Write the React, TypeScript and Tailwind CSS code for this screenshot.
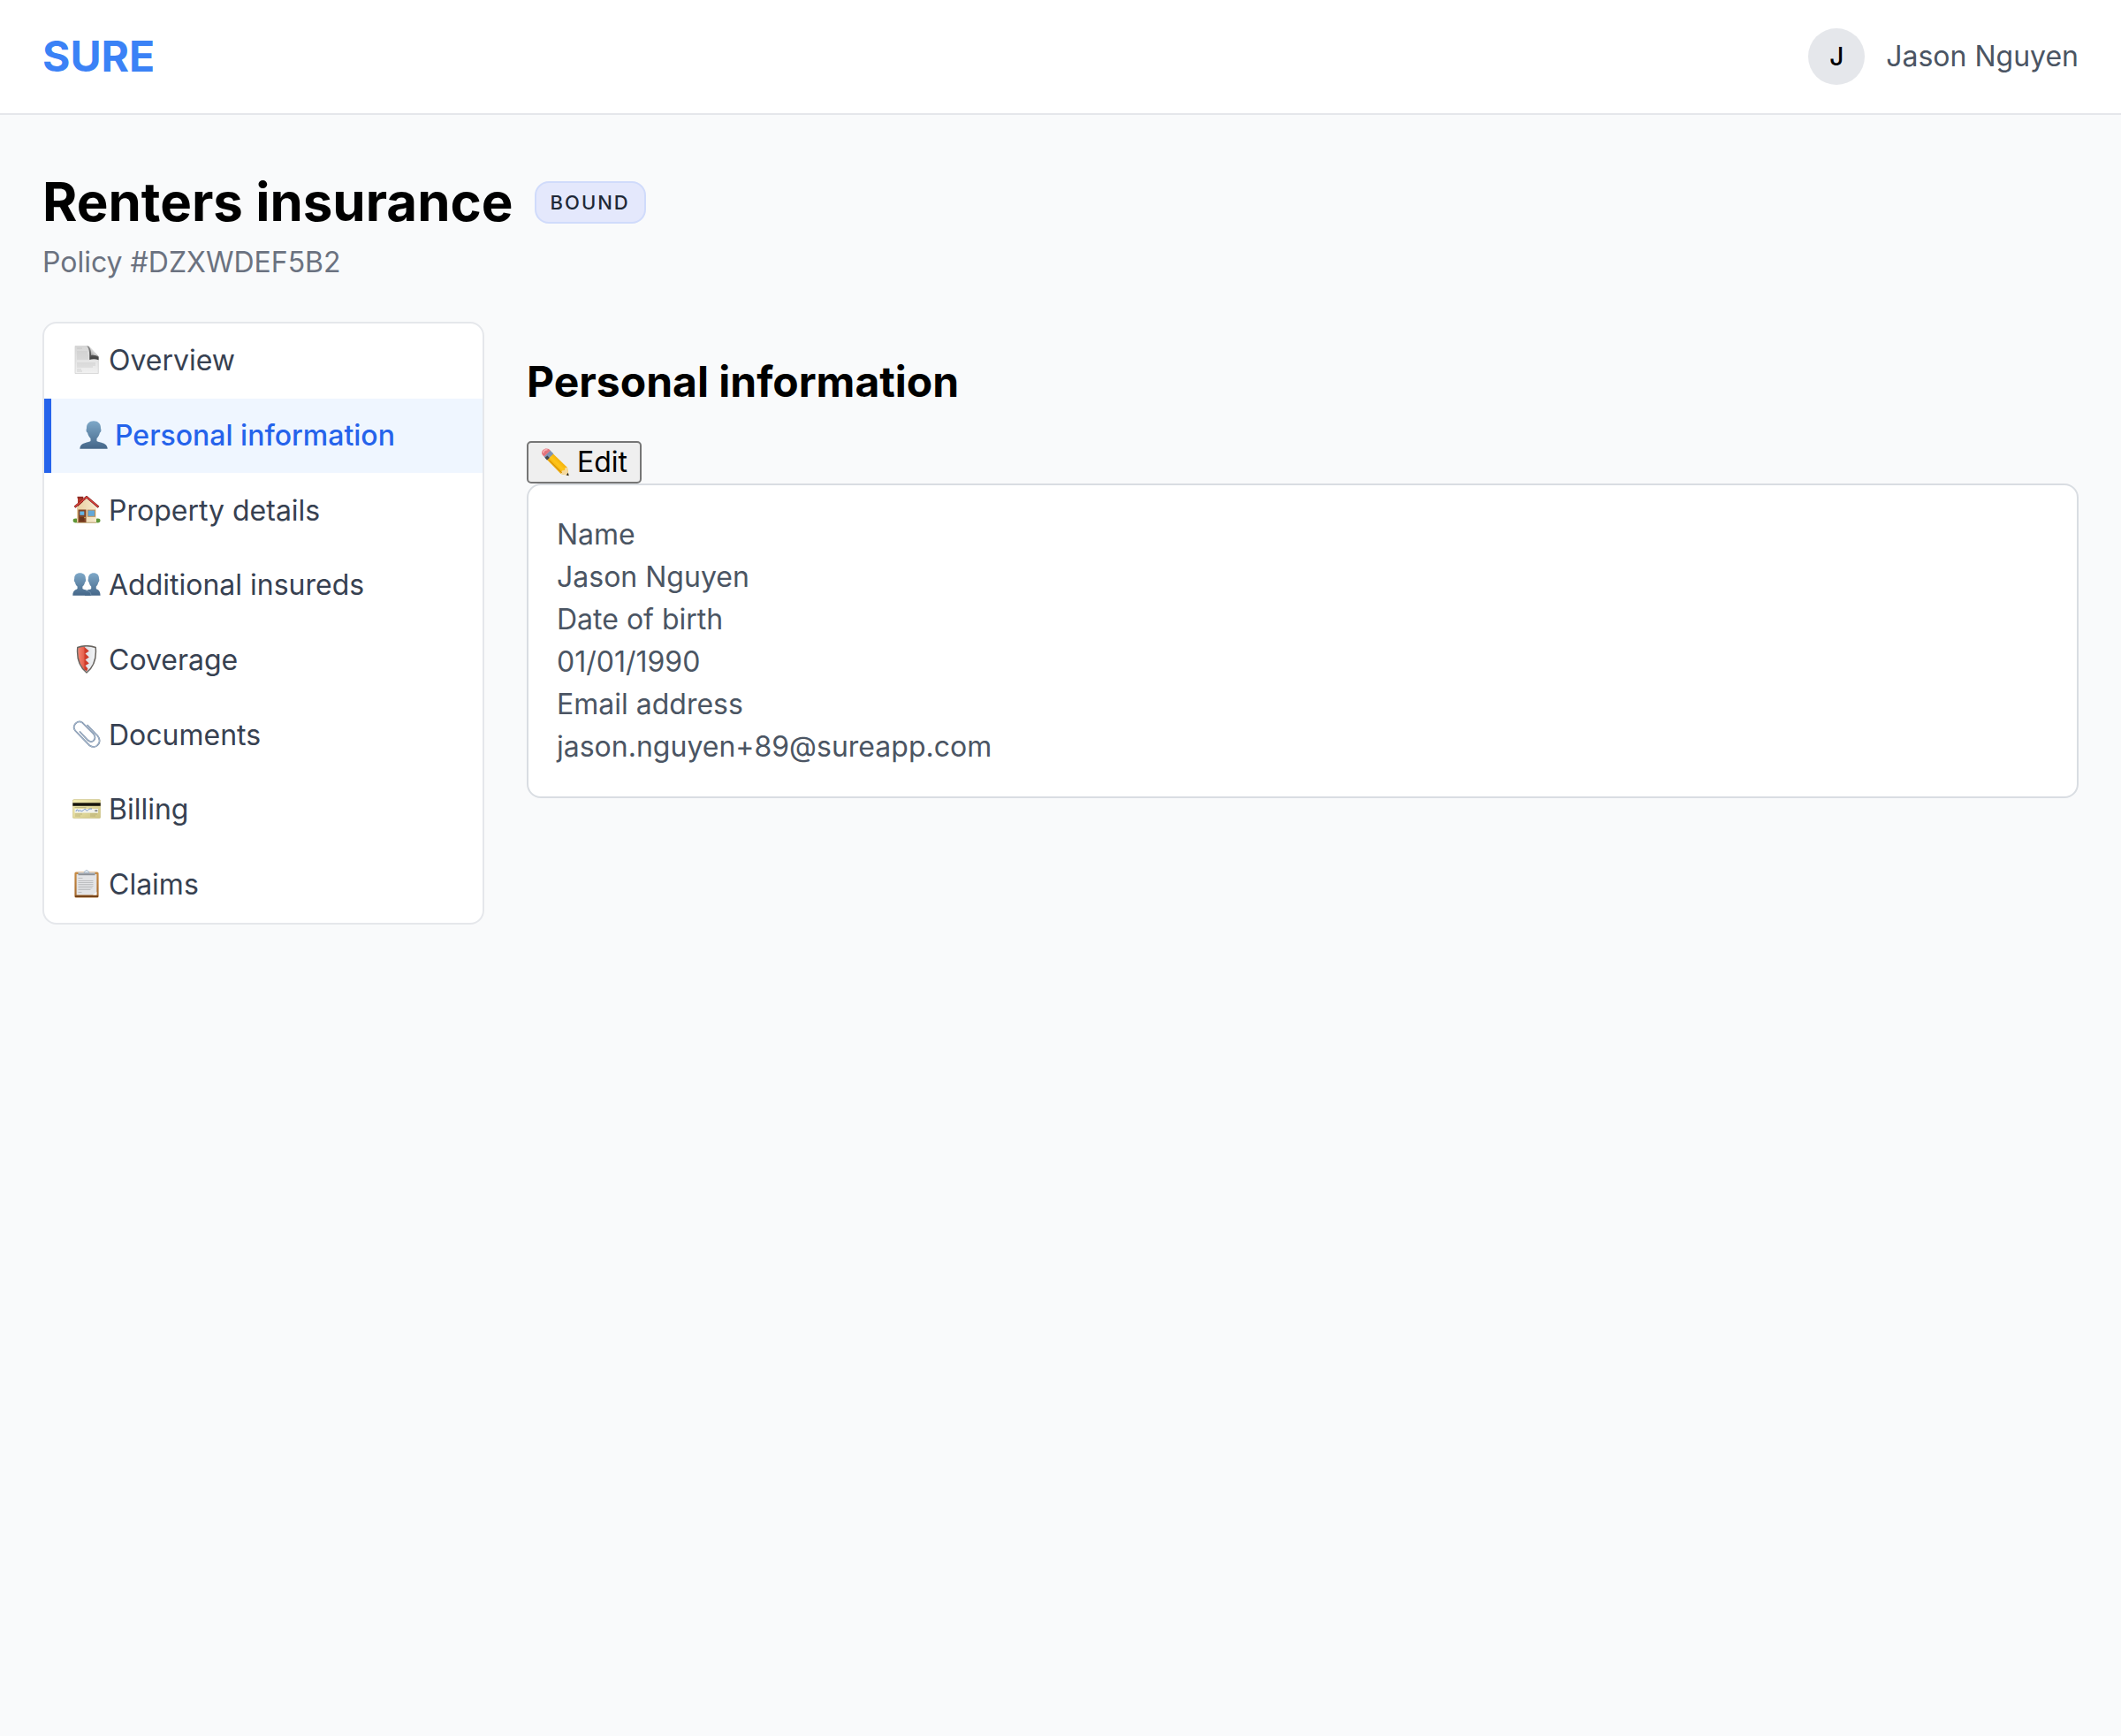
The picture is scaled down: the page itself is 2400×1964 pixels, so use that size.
import React from "react";

const ICON = "relative -top-px size-8 shrink-0";

function PageIcon() {
  return (
    <svg viewBox="0 0 32 32" className={ICON}>
      <defs>
        <linearGradient id="pg" x1="0" y1="0" x2="0" y2="1">
          <stop offset="0" stopColor="#d6d6d6" />
          <stop offset="1" stopColor="#f1f1f1" />
        </linearGradient>
        <linearGradient id="pf" x1="1" y1="0" x2="0" y2="1">
          <stop offset=".35" stopColor="#f4f4f4" />
          <stop offset=".6" stopColor="#c5c5c5" />
          <stop offset="1" stopColor="#5e5e5e" />
        </linearGradient>
        <linearGradient id="pd" x1="0" y1="0" x2="0" y2="1">
          <stop offset="0" stopColor="#8d8d8d" />
          <stop offset="1" stopColor="#3c3c3c" />
        </linearGradient>
      </defs>
      <path d="M3 .5H17L29.300 13V31.500H3Z" fill="url(#pg)" stroke="#d2d2d2" strokeWidth=".8" />
      <path d="M5 3h6M5 7h12M5 9h12M5 11h13M5 13h13M5 15h13M5 20h21M5 22h21M5 24h18M5 27h5M5 29h6" stroke="#bdbdbd" strokeWidth=".7" opacity=".8" />
      <path d="M16 .3C19.500 3.500 19.300 10 19.300 16C22.500 14.800 26.500 15 29.600 16.200V12.500L18.500 .8Z" fill="url(#pd)" />
      <path d="M17.500 .4C20.500 2.500 21.300 6.500 21 11C24.500 10.400 27.500 11 29.600 13C27 9 22 3.500 17.500 .4Z" fill="url(#pf)" />
    </svg>
  );
}

function PersonIcon() {
  return (
    <svg viewBox="0 0 32 32" className={ICON}>
      <defs>
        <linearGradient id="ps" x1="0" y1="0" x2="0" y2="1">
          <stop offset="0" stopColor="#7ea8c8" />
          <stop offset="1" stopColor="#456789" />
        </linearGradient>
      </defs>
      <path d="M16 .3C21 .3 24 3.400 24 8C24 9.400 24.600 9.800 24.400 11.200C24.200 12.600 23.600 13.200 23 13.500C22.400 16.500 21 18.500 19.500 20V23C21 24.800 31.500 24 31.700 31.700H.3C.5 24 11 24.800 12.500 23V20C11 18.500 9.600 16.500 9 13.500C8.400 13.200 7.800 12.600 7.600 11.200C7.400 9.800 8 9.400 8 8C8 3.400 11 .3 16 .3Z" fill="url(#ps)" />
    </svg>
  );
}

function HouseIcon() {
  return (
    <svg viewBox="0 0 32 32" className={ICON}>
      <defs>
        <linearGradient id="hw" x1="0" y1="0" x2="1" y2="0">
          <stop offset="0" stopColor="#e8cfa2" />
          <stop offset="1" stopColor="#f7e9cc" />
        </linearGradient>
      </defs>
      <path d="M6 1.500h6v8l-6 5Z" fill="#b3392c" />
      <path d="M5.500 .8h6.800v2H5.500Z" fill="#8d2a22" />
      <ellipse cx="3.800" cy="28" rx="3.200" ry="2.400" fill="#5f9637" />
      <ellipse cx="28.500" cy="28" rx="3" ry="2.400" fill="#5f9637" />
      <path d="M5 13L16 3L27 13V30.800H5Z" fill="url(#hw)" />
      <path d="M5 29.600h22v1.400H5Z" fill="#c9b78f" />
      <path d="M2.500 12.800L16 1.300L29.500 12.800" fill="none" stroke="#7e1f1c" strokeWidth="2.600" />
      <path d="M2.900 12.300L16 1.300L29.100 12.300" fill="none" stroke="#e2473f" strokeWidth="1.300" />
      <rect x="6.500" y="15.500" width="9" height="14.500" fill="#834627" />
      <rect x="8.300" y="17.500" width="5" height="4.300" fill="#62b5e6" />
      <rect x="8.300" y="24" width="5" height="4.500" fill="#6a351b" />
      <circle cx="14" cy="24.500" r=".7" fill="#f0c55c" />
      <rect x="16.800" y="15.600" width="9.200" height="8.200" fill="#b88e5c" />
      <rect x="17.800" y="16.600" width="7.200" height="6.200" fill="#62a8d8" />
    </svg>
  );
}

function PeopleIcon() {
  return (
    <svg viewBox="0 0 32 32" className={ICON}>
      <defs>
        <linearGradient id="pp" x1="0" y1="0" x2="0" y2="1">
          <stop offset="0" stopColor="#7ea8c8" />
          <stop offset="1" stopColor="#456789" />
        </linearGradient>
      </defs>
      <path d="M24 3.200C27.800 3.200 30 5.500 30 9C30 10.500 30.600 10.700 30.300 12C30 13.400 29.500 13.500 29.200 14C28.800 16 27.800 17.500 26.800 18.500V21C28 22.200 31.500 22 31.600 28.800H14V24C17 21.800 20 22.200 21.200 21V18.500C20.200 17.500 19.200 16 18.800 14C18.500 13.500 18 13.400 17.700 12C17.400 10.700 18 10.500 18 9C18 5.500 20.200 3.200 24 3.200Z" fill="url(#pp)" />
      <path d="M8.500 3.200C12.500 3.200 14.800 5.500 14.800 9C14.800 10.500 15.400 10.700 15.100 12C14.800 13.400 14.300 13.500 14 14C13.600 16 12.600 17.500 11.400 18.500V21C12.800 22.500 20.700 22 20.800 28.800H.3C.4 22 4.200 22.500 5.600 21V18.500C4.400 17.500 3.400 16 3 14C2.700 13.500 2.200 13.400 1.900 12C1.600 10.700 2.200 10.500 2.200 9C2.200 5.500 4.500 3.200 8.500 3.200Z" fill="url(#pp)" />
      <path d="M15 23.300C19 23.700 20.600 25 20.900 28" fill="none" stroke="#7fa0ba" strokeWidth=".6" />
    </svg>
  );
}

function ShieldIcon() {
  return (
    <svg viewBox="0 0 32 32" className={ICON}>
      <defs>
        <linearGradient id="sh" x1="0" y1="0" x2="1" y2="0">
          <stop offset="0" stopColor="#c9cdd3" />
          <stop offset="1" stopColor="#f6f7f9" />
        </linearGradient>
        <linearGradient id="sr" x1="0" y1="0" x2="1" y2="0">
          <stop offset="0" stopColor="#f58471" />
          <stop offset="1" stopColor="#e25a46" />
        </linearGradient>
      </defs>
      <path d="M5.800 2.500C12 .3 20 .3 26.200 2.500C27.300 14 25.500 23.500 16 31C6.500 23.500 4.700 14 5.800 2.500Z" fill="url(#sh)" />
      <path d="M6.500 3C9.500 1.800 12 1.500 14 1.500V28.500C7.500 22 5.400 14 6.500 3Z" fill="url(#sr)" />
      <path d="M13.500 2L18.800 6.500L14.500 9.500L18.800 13.500L14.500 16.500L18.800 20.500L14.500 23L17.500 26.500L16 29.500L13.500 27.500Z" fill="#cf3b2a" />
      <path d="M5.800 2.500C12 .3 20 .3 26.200 2.500C27.300 14 25.500 23.500 16 31C6.500 23.500 4.700 14 5.800 2.500Z" fill="none" stroke="#68645f" strokeWidth="1.500" />
    </svg>
  );
}

function PaperclipIcon() {
  return (
    <svg viewBox="0 0 32 32" className={ICON} fill="none" strokeLinecap="round">
      <path d="M17 5.500L28.500 17.500C34 24.500 27 33.500 19.500 28.500L3 11.500C-1 6 5.500 -1 11 2.500L24 15.500C28 21 22.500 26.500 17.500 22.500L8.500 13" stroke="#71849c" strokeWidth="1.700" />
      <path d="M17 5.500L28.500 17.500C34 24.500 27 33.500 19.500 28.500L3 11.500C-1 6 5.500 -1 11 2.500L24 15.500C28 21 22.500 26.500 17.500 22.500L8.500 13" stroke="#c2d6ec" strokeWidth=".7" />
    </svg>
  );
}

function CardIcon() {
  return (
    <svg viewBox="0 0 32 32" className={ICON}>
      <defs>
        <linearGradient id="cc" x1="0" y1="0" x2="1" y2="1">
          <stop offset="0" stopColor="#f5efb4" />
          <stop offset="1" stopColor="#cdc383" />
        </linearGradient>
      </defs>
      <rect x=".3" y="5.500" width="31.400" height="21.200" rx="1.500" fill="url(#cc)" stroke="#c9bf85" strokeWidth=".6" />
      <rect x=".3" y="9.300" width="31.400" height="3.500" fill="#16140c" />
      <path d="M2.500 14.500h13M3 22h8M3 24h6M20 22h8M20 24h6" stroke="#a79f6d" strokeWidth=".6" />
      <rect x="2.500" y="16" width="26.500" height="4.600" fill="#f1f2ec" />
      <path d="M4 19c1-3 2-2 2.500-.5s2-2 2.500-.5 2 .5 3 0 2-3 3-1 2 1 3 0 2-1 4-1" fill="none" stroke="#5c82c4" strokeWidth=".9" />
      <path d="M25.300 18.200h3" stroke="#55565a" strokeWidth="1.200" />
    </svg>
  );
}

function ClipboardIcon() {
  return (
    <svg viewBox="0 0 32 32" className={ICON}>
      <defs>
        <linearGradient id="cl" x1="0" y1="0" x2="0" y2="1">
          <stop offset="0" stopColor="#c98d45" />
          <stop offset="1" stopColor="#a3672c" />
        </linearGradient>
      </defs>
      <rect x="2.400" y="2.500" width="27.200" height="29" rx="1.600" fill="url(#cl)" />
      <path d="M3 29.300h26v1.600H3Z" fill="#6e3e17" />
      <path d="M4.600 5h22.800v23.500H4.600Z" fill="#e3e4e6" />
      <path d="M23 28.500l4.400-3.500v3.500Z" fill="#f8f8f8" />
      <path d="M6.500 9.500h5M6.500 12.500h17M6.500 14.500h17M6.500 16.500h17M6.500 18.500h17M6.500 20.500h16M6.500 22.500h14M6.500 25.500h4" stroke="#b4b5b8" strokeWidth=".8" />
      <path d="M6.500 3h19v3.200h-19Z" fill="#8c9197" />
      <path d="M6.500 3h19v1.300h-19Z" fill="#c5cad0" />
      <path d="M13 3.200c0-1.500 1.500-1.200 1.500-2 .6-1 2.400-1 3 0 0 .8 1.500.5 1.500 2Z" fill="#e5ecf3" stroke="#8fa3b8" strokeWidth=".7" />
    </svg>
  );
}

function PencilIcon() {
  return (
    <svg viewBox="0 0 32 32" className="size-8 shrink-0">
      <defs>
        <linearGradient id="pn" x1="0" y1="1" x2="1" y2="0">
          <stop offset=".3" stopColor="#e09a05" />
          <stop offset=".5" stopColor="#ffc61a" />
          <stop offset=".7" stopColor="#f0aa08" />
        </linearGradient>
      </defs>
      <path d="M5.500 11.500L12.500 5L30 22L31.500 31L22.500 29Z" fill="url(#pn)" />
      <path d="M22.500 29L24 25.500L27 25L27.300 22.300L30 22L31.500 31Z" fill="#f4d9a0" />
      <path d="M28.800 30.400L30.800 27.800L31.600 31.300Z" fill="#222" />
      <path d="M3.500 9.500L10.500 2.500L14.300 6.300L7 13.500Z" fill="#7d93b5" />
      <path d="M4.500 10.700L7.500 8.500L9.800 11L7 13.600Z" fill="#45464a" />
      <path d="M2 8C.3 5.500 1 3.500 2.500 2S6.500 -.2 9 1L10.800 2.800L3.700 9.600Z" fill="#e3737c" />
      <path d="M2.500 5.500C3 3 5 1.500 7.500 1.700" fill="none" stroke="#f6b0b3" strokeWidth="1.600" />
      <path d="M8.500 12.800L24 28" stroke="#c98204" strokeWidth=".8" />
    </svg>
  );
}

const NAV = [
  { label: "Overview", Icon: PageIcon },
  { label: "Personal information", Icon: PersonIcon, active: true },
  { label: "Property details", Icon: HouseIcon },
  { label: "Additional insureds", Icon: PeopleIcon },
  { label: "Coverage", Icon: ShieldIcon },
  { label: "Documents", Icon: PaperclipIcon },
  { label: "Billing", Icon: CardIcon },
  { label: "Claims", Icon: ClipboardIcon },
];

const DETAILS = [
  ["Name", "Jason Nguyen"],
  ["Date of birth", "01/01/1990"],
  ["Email address", "jason.nguyen+89@sureapp.com"],
];

export default function App() {
  return (
    <div className="min-h-screen bg-[#f9fafb] font-['Inter',sans-serif] text-[32px] leading-[48px] text-black antialiased">
      <header className="flex h-[130px] items-center justify-between border-b-2 border-[#e5e7eb] bg-white px-12">
        <div className="text-[48px] leading-[64px] font-bold text-[#3b82f6]">SURE</div>
        <div className="flex items-center gap-6">
          <div className="flex size-16 items-center justify-center rounded-full bg-[#e5e7eb] text-[28px] font-medium">J</div>
          <span className="text-[#4b5563]">Jason Nguyen</span>
        </div>
      </header>

      <div className="px-12 pt-[62px]">
        <div className="flex items-center gap-6">
          <h1 className="text-[60px] leading-[72px] font-bold">Renters insurance</h1>
          <span className="mt-0.5 flex h-12 items-center rounded-2xl border-2 border-[#d0dbfb] bg-[#e4e8fc] px-4 text-[22px] font-medium tracking-[2px] text-[#1f2937]">
            BOUND
          </span>
        </div>
        <p className="mt-[9px] text-[#6b7280]">Policy #DZXWDEF5B2</p>

        <div className="mt-[43px] flex items-start gap-12">
          <nav className="flex w-[500px] shrink-0 flex-col overflow-hidden rounded-2xl border-2 border-[#e5e7eb] bg-white">
            {NAV.map(({ label, Icon, active }) => (
              <a
                key={label}
                className={
                  active
                    ? "flex h-[84.7px] items-center gap-2 border-l-8 border-[#2563eb] bg-[#eff6ff] px-8 font-medium text-[#2563eb]"
                    : "flex h-[84.7px] items-center gap-[9px] px-8 text-[#374151]"
                }
              >
                <Icon />
                {label}
              </a>
            ))}
          </nav>

          <main className="flex-1 pt-9">
            <h2 className="text-[48px] leading-[64px] font-bold">Personal information</h2>
            <button className="mt-[35px] flex h-12 items-center gap-[9px] rounded-[5px] border-2 border-[#767676] bg-[#efefef] px-[14px]">
              <PencilIcon />
              Edit
            </button>
            <dl className="rounded-2xl border-2 border-[#d9dde2] bg-white p-8 text-[#4b5563]">
              {DETAILS.map(([term, value]) => (
                <React.Fragment key={term}>
                  <dt>{term}</dt>
                  <dd>{value}</dd>
                </React.Fragment>
              ))}
            </dl>
          </main>
        </div>
      </div>
    </div>
  );
}
